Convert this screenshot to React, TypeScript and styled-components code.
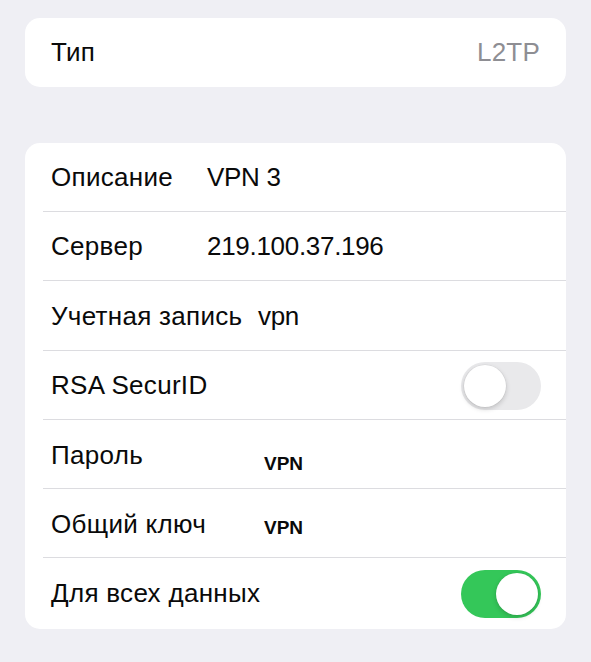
import React from "react";
import styled, { createGlobalStyle } from "styled-components";

const Global = createGlobalStyle`
  html, body { margin: 0; padding: 0; background: #efeff4; }
  body { font-family: "Liberation Sans", Arial, sans-serif; -webkit-font-smoothing: antialiased; }
`;

const Page = styled.div`
  width: 591px;
  height: 662px;
  box-sizing: border-box;
  padding: 18px 25px 0 25px;
  display: flex;
  flex-direction: column;
  gap: 56px;
  background: #efeff4;
`;

const Card = styled.div`
  background: #ffffff;
  border-radius: 15px;
  overflow: hidden;
  display: flex;
  flex-direction: column;
`;

const Row = styled.div<{ $h?: number; $last?: boolean }>`
  position: relative;
  height: ${(p) => p.$h ?? 69}px;
  display: flex;
  align-items: center;
  padding: 0 26px 0 26px;
  box-sizing: border-box;
  ${(p) =>
    p.$last
      ? ""
      : `&::after {
    content: "";
    position: absolute;
    left: 18px;
    right: 0;
    bottom: 0;
    height: 1px;
    background: #dcdce0;
  }`}
`;

const Label = styled.span<{ $w?: number; $dy?: number }>`
  font-size: 26px;
  letter-spacing: 0.3px;
  color: #0a0a0a;
  width: ${(p) => (p.$w ? `${p.$w}px` : "auto")};
  flex-shrink: 0;
  white-space: nowrap;
  transform: translateY(${(p) => p.$dy ?? 0}px);
`;

const Value = styled.span`
  font-size: 26px;
  letter-spacing: -0.3px;
  color: #0a0a0a;
`;

const Secret = styled.span<{ $dy?: number }>`
  font-size: 19px;
  font-weight: 700;
  color: #0a0a0a;
  transform: translateY(${(p) => p.$dy ?? 0}px);
`;

const Right = styled.span`
  margin-left: auto;
  font-size: 26px;
  letter-spacing: 0.2px;
  color: #8e8e93;
`;

const Toggle = styled.div<{ $on?: boolean }>`
  margin-left: auto;
  margin-right: -1px;
  width: 80px;
  height: 48px;
  border-radius: 24px;
  background: ${(p) => (p.$on ? "#34c759" : "#e9e9eb")};
  position: relative;
  flex-shrink: 0;
  &::after {
    content: "";
    position: absolute;
    top: 3px;
    left: ${(p) => (p.$on ? "35px" : "3px")};
    width: 42px;
    height: 42px;
    border-radius: 50%;
    background: #fff;
    box-shadow: 0 2px 5px rgba(0, 0, 0, 0.18), 0 0 0 0.5px rgba(0, 0, 0, 0.06);
  }
`;

export default function App() {
  return (
    <>
      <Global />
      <Page>
        <Card>
          <Row $h={69} $last>
            <Label>Тип</Label>
            <Right>L2TP</Right>
          </Row>
        </Card>
        <Card>
          <Row $h={69}>
            <Label $w={156}>Описание</Label>
            <Value>VPN 3</Value>
          </Row>
          <Row $h={69}>
            <Label $w={156}>Сервер</Label>
            <Value>219.100.37.196</Value>
          </Row>
          <Row $h={70}>
            <Label $w={207}>Учетная запись</Label>
            <Value>vpn</Value>
          </Row>
          <Row $h={69}>
            <Label>RSA SecurID</Label>
            <Toggle />
          </Row>
          <Row $h={69}>
            <Label $w={213} $dy={1}>Пароль</Label>
            <Secret $dy={9}>VPN</Secret>
          </Row>
          <Row $h={69}>
            <Label $w={213} $dy={1}>Общий ключ</Label>
            <Secret $dy={4}>VPN</Secret>
          </Row>
          <Row $h={71} $last>
            <Label>Для всех данных</Label>
            <Toggle $on />
          </Row>
        </Card>
      </Page>
    </>
  );
}
